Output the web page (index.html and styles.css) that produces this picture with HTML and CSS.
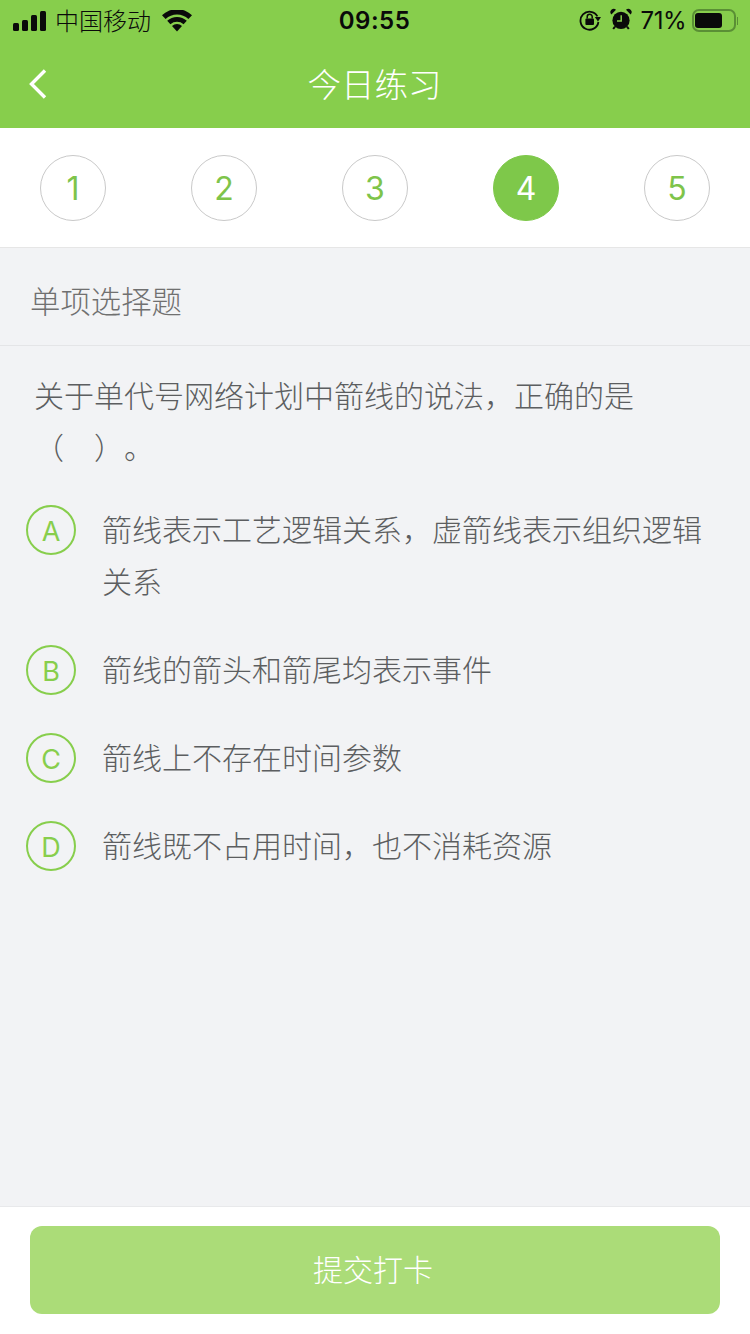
FILE: index.html
```html
<!DOCTYPE html>
<html lang="zh-CN">
<head>
<meta charset="utf-8">
<title>今日练习</title>
<link rel="stylesheet" href="styles.css">
</head>
<body>
<div class="page">
  <header class="top">
    <div class="status">
      <div class="status-left">
        <svg class="signal" width="34" height="20" viewBox="0 0 34 20"><rect x="0" y="12" width="6" height="8" rx="1.5"/><rect x="9" y="9" width="6" height="11" rx="1.5"/><rect x="18" y="4" width="6" height="16" rx="1.5"/><rect x="27" y="0" width="6" height="20" rx="1.5"/></svg>
        <span class="carrier">中国移动</span>
        <svg class="wifi" width="30" height="22" viewBox="0 0 30 22"><path d="M15 21.5 10 16a7.4 7.4 0 0 1 10 0Z"/><path d="M8.4 14.2 5.2 10.8a14.4 14.4 0 0 1 19.6 0l-3.2 3.4a10 10 0 0 0-13.2 0Z"/><path d="M3.6 9 0 5.2a21.8 21.8 0 0 1 30 0L26.4 9a16.6 16.6 0 0 0-22.8 0Z"/></svg>
      </div>
      <div class="time">09:55</div>
      <div class="status-right">
        <svg class="lock" width="22" height="22" viewBox="0 0 22 22"><path d="M18.4 7.4A9 9 0 1 0 19.4 13" fill="none" stroke="#0a0a0a" stroke-width="1.8"/><path d="M15.8 8 22 8 19 12.4Z"/><rect x="6.4" y="9.4" width="8.6" height="6.6" rx="1"/><path d="M8.2 9.6V7.8a2.5 2.5 0 0 1 5 0v1.8" fill="none" stroke="#0a0a0a" stroke-width="1.5"/></svg>
        <svg class="alarm" width="22" height="22" viewBox="0 0 22 22"><circle cx="11" cy="12.4" r="8.6"/><path d="M1.4 6.4 6 1.8A3.2 3.2 0 0 0 1.4 6.4ZM20.6 6.4 16 1.8A3.2 3.2 0 0 1 20.6 6.4Z"/><path d="M5 18.6 3.2 21M17 18.6 18.8 21" stroke="#0a0a0a" stroke-width="2" fill="none"/><path d="M11.2 7.2V13H7" fill="none" stroke="#87ce4c" stroke-width="1.5"/></svg>
        <span class="pct">71%</span>
        <div class="battery"><div class="battery-fill"></div></div>
        <div class="battery-cap"></div>
      </div>
    </div>
    <div class="nav">
      <svg class="back" width="20" height="32" viewBox="0 0 20 32"><path d="M17 2.5 3.5 16 17 29.5" fill="none" stroke="#fff" stroke-width="3.4"/></svg>
      <h1 class="nav-title">今日练习</h1>
    </div>
  </header>

  <nav class="steps">
    <div class="step">1</div>
    <div class="step">2</div>
    <div class="step">3</div>
    <div class="step step-current">4</div>
    <div class="step">5</div>
  </nav>

  <main class="body">
    <div class="kind">单项选择题</div>
    <div class="question">
      <p class="stem">关于单代号网络计划中箭线的说法，正确的是（　）。</p>
      <ul class="options">
        <li class="option"><span class="letter">A</span><span class="option-text">箭线表示工艺逻辑关系，虚箭线表示组织逻辑关系</span></li>
        <li class="option"><span class="letter">B</span><span class="option-text">箭线的箭头和箭尾均表示事件</span></li>
        <li class="option"><span class="letter">C</span><span class="option-text">箭线上不存在时间参数</span></li>
        <li class="option"><span class="letter">D</span><span class="option-text">箭线既不占用时间，也不消耗资源</span></li>
      </ul>
    </div>
  </main>

  <footer class="foot">
    <button class="submit" type="button">提交打卡</button>
  </footer>
</div>
</body>
</html>
```
FILE: styles.css
```css
* { box-sizing: border-box; }
html, body { margin: 0; padding: 0; }
body {
  font-family: "Noto Sans CJK SC", "Liberation Sans", sans-serif;
  background: #f2f3f5;
  text-spacing-trim: space-all;
}
.page {
  width: 750px;
  height: 1334px;
  display: flex;
  flex-direction: column;
  overflow: hidden;
}
.top { background: #87ce4c; height: 128px; flex: none; }
.status {
  height: 40px;
  padding: 1px 12px 0 13px;
  display: grid;
  grid-template-columns: 1fr auto 1fr;
  align-items: center;
  color: #0a0a0a;
}
.status svg { fill: #0a0a0a; display: block; flex: none; }
.status-left { display: flex; align-items: center; }
.carrier { font-size: 24px; font-weight: 300; line-height: 36px; margin: 0 0 2px 8px; }
.wifi { margin-left: 11px; }
.time {
  font-family: Inter, "Liberation Sans", sans-serif;
  font-weight: 600;
  font-size: 24px;
  letter-spacing: 0.5px;
  padding-right: 2px;
}
.status-right { display: flex; align-items: center; justify-content: flex-end; }
.lock { margin-bottom: 2px; }
.alarm { margin: 0 0 3px 9px; }
.pct {
  font-family: Inter, "Liberation Sans", sans-serif;
  font-size: 24px;
  letter-spacing: -0.5px;
  margin-left: 9px;
}
.battery {
  width: 44px;
  height: 23px;
  margin: 0 0 1px 6px;
  padding: 2px 1px;
  border: 2px solid #5a8f35;
  border-radius: 7px;
}
.battery-fill { width: 27px; height: 15px; background: #0a0a0a; border-radius: 3px; }
.battery-cap { width: 1px; height: 8px; margin-left: 1px; background: #5a8f35; }
.nav {
  height: 88px;
  display: flex;
  align-items: center;
  justify-content: center;
  position: relative;
}
.back { position: absolute; left: 28px; top: 28px; }
.nav-title {
  margin: 0;
  color: #fff;
  font-size: 33.5px;
  font-weight: 300;
  line-height: 82px;
  margin-bottom: 2px;
  padding-right: 1px;
}
.steps {
  flex: none;
  height: 120px;
  background: #fff;
  border-bottom: 1px solid #e6e6e6;
  padding: 27px 40px 0;
  display: flex;
  justify-content: space-between;
  align-items: flex-start;
}
.step {
  width: 66px;
  height: 66px;
  border: 1px solid #c9c9c9;
  border-radius: 50%;
  display: flex;
  align-items: center;
  justify-content: center;
  color: #7ec44a;
  font-family: Inter, "Liberation Sans", sans-serif;
  font-weight: 400;
  font-size: 32px;
}
.step-current { background: #7ec84a; border-color: #7ec84a; color: #fff; }
.body { flex: 1; min-height: 0; background: #f2f3f5; }
.kind {
  height: 98px;
  padding-left: 30px;
  border-bottom: 1px solid #e4e5e7;
  color: #707070;
  font-size: 30.4px;
  font-weight: 300;
  line-height: 104px;
}
.question { padding: 24px 0 0; }
.stem {
  margin: -2px 0 32px;
  padding: 0 110px 0 34px;
  color: #5c5e60;
  font-size: 30px;
  font-weight: 300;
  line-height: 52px;
}
.options {
  list-style: none;
  margin: 0;
  padding: 0 40px 0 26px;
  display: flex;
  flex-direction: column;
  gap: 36px;
}
.option { display: flex; align-items: flex-start; gap: 26px; }
.letter {
  flex: none;
  width: 50px;
  height: 50px;
  margin-top: 1px;
  padding-top: 2px;
  border: 2px solid #87ce4c;
  border-radius: 50%;
  display: flex;
  align-items: center;
  justify-content: center;
  color: #87ce4c;
  font-family: Inter, "Liberation Sans", sans-serif;
  font-weight: 400;
  font-size: 27px;
}
.option-text { color: #5c5e60; font-size: 30px; font-weight: 300; line-height: 52px; margin-top: -2px; margin-bottom: 2px; }
.foot {
  flex: none;
  height: 128px;
  background: #fff;
  border-top: 1px solid #e8e9eb;
  padding: 19px 30px 0;
}
.submit {
  display: block;
  width: 100%;
  height: 88px;
  border: 0;
  border-radius: 12px;
  background: #abdc78;
  color: #fff;
  font-family: inherit;
  font-size: 30px;
  font-weight: 300;
  padding: 0 4px 4px 0;
}
```
